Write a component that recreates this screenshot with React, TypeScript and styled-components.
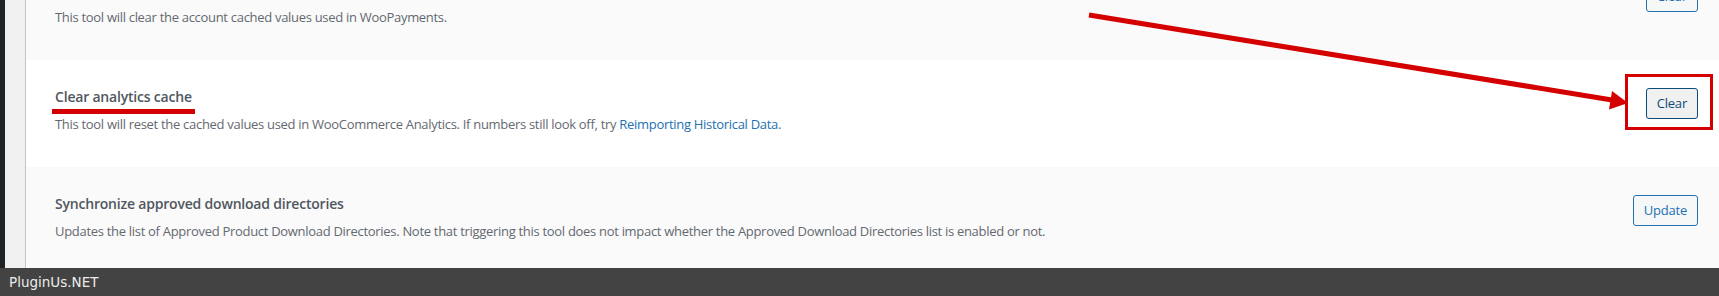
import React from 'react';
import styled, { createGlobalStyle } from 'styled-components';

const GlobalStyle = createGlobalStyle`
  html, body {
    margin: 0;
    padding: 0;
    height: 296px;
    overflow: hidden;
    background: #fafafa;
  }
  body {
    font-family: "Open Sans", "Noto Sans", sans-serif;
    -webkit-font-smoothing: antialiased;
  }
`;

const Page = styled.div`
  display: flex;
  height: 296px;
  overflow: hidden;
`;

const AdminMenuEdge = styled.div`
  flex: none;
  width: 5px;
  background: #1d2327;
`;

const Gutter = styled.div`
  flex: none;
  width: 20px;
  background: #f0f0f1;
  border-right: 1px solid #c3c4c7;
`;

const Main = styled.main`
  flex: 1;
  min-width: 0;
  display: flex;
  flex-direction: column;
  margin-top: -47px;
`;

const ToolRow = styled.section<{ $alt?: boolean }>`
  flex: none;
  display: flex;
  align-items: flex-start;
  justify-content: space-between;
  height: 107px;
  box-sizing: border-box;
  padding: 26px 21px 0 29px;
  background: ${(p) => (p.$alt ? '#fafafa' : '#ffffff')};
`;

const ToolText = styled.div`
  display: flex;
  flex-direction: column;
`;

const ToolTitle = styled.h3`
  position: relative;
  margin: 0;
  font-size: 14px;
  font-weight: 600;
  line-height: 22px;
  letter-spacing: -0.2px;
  color: #50575e;
`;

const TitleUnderline = styled.span`
  position: absolute;
  left: -3px;
  top: 23px;
  width: 143px;
  height: 5px;
  background: #d40000;
`;

const ToolDesc = styled.p`
  margin: 6px 0 0;
  font-size: 13px;
  line-height: 20px;
  letter-spacing: -0.3px;
  color: #646970;
`;

const DescLink = styled.a`
  color: #2271b1;
  text-decoration: none;
`;

const ButtonSlot = styled.div`
  position: relative;
  flex: none;
  margin-top: 2px;
`;

const ToolButton = styled.button<{ $active?: boolean }>`
  box-sizing: border-box;
  height: 31px;
  padding: 0 10px;
  border-radius: 3px;
  border: 1px solid ${(p) => (p.$active ? '#0a4b78' : '#2271b1')};
  background: ${(p) => (p.$active ? '#f0f0f1' : '#f6f7f7')};
  color: ${(p) => (p.$active ? '#0a4b78' : '#2271b1')};
  font-family: "Open Sans", "Noto Sans", sans-serif;
  font-size: 13px;
  line-height: 29px;
  letter-spacing: -0.2px;
  cursor: pointer;
`;

const Highlight = styled.span`
  position: absolute;
  left: -21px;
  top: -14px;
  width: 88px;
  height: 56px;
  box-sizing: border-box;
  border: 3px solid #d40000;
  pointer-events: none;
`;

const ArrowLayer = styled.svg`
  position: fixed;
  left: 0;
  top: 0;
  width: 1719px;
  height: 296px;
  pointer-events: none;
`;

const Watermark = styled.footer`
  position: fixed;
  left: 0;
  right: 0;
  bottom: 0;
  height: 28px;
  background: #434343;
  color: #ececec;
  font-family: "DejaVu Sans", sans-serif;
  font-size: 13.5px;
  line-height: 28px;
  padding-left: 9px;
`;

export default function App() {
  return (
    <>
      <GlobalStyle />
      <Page>
        <AdminMenuEdge />
        <Gutter />
        <Main>
          <ToolRow $alt>
            <ToolText>
              <ToolTitle>Clear account cache</ToolTitle>
              <ToolDesc>This tool will clear the account cached values used in WooPayments.</ToolDesc>
            </ToolText>
            <ButtonSlot>
              <ToolButton>Clear</ToolButton>
            </ButtonSlot>
          </ToolRow>
          <ToolRow>
            <ToolText>
              <ToolTitle>
                Clear analytics cache
                <TitleUnderline />
              </ToolTitle>
              <ToolDesc>
                This tool will reset the cached values used in WooCommerce Analytics. If numbers still look off, try{' '}
                <DescLink href="#">Reimporting Historical Data</DescLink>.
              </ToolDesc>
            </ToolText>
            <ButtonSlot>
              <ToolButton $active>Clear</ToolButton>
              <Highlight />
            </ButtonSlot>
          </ToolRow>
          <ToolRow $alt>
            <ToolText>
              <ToolTitle>Synchronize approved download directories</ToolTitle>
              <ToolDesc>
                Updates the list of Approved Product Download Directories. Note that triggering this tool does not impact whether the Approved Download Directories list is enabled or not.
              </ToolDesc>
            </ToolText>
            <ButtonSlot>
              <ToolButton>Update</ToolButton>
            </ButtonSlot>
          </ToolRow>
        </Main>
      </Page>
      <ArrowLayer viewBox="0 0 1719 296">
        <line x1="1089" y1="15" x2="1612" y2="100" stroke="#d40000" strokeWidth="5" />
        <polygon points="1628,103 1609,109.5 1612,91" fill="#d40000" />
      </ArrowLayer>
      <Watermark>PluginUs.NET</Watermark>
    </>
  );
}
